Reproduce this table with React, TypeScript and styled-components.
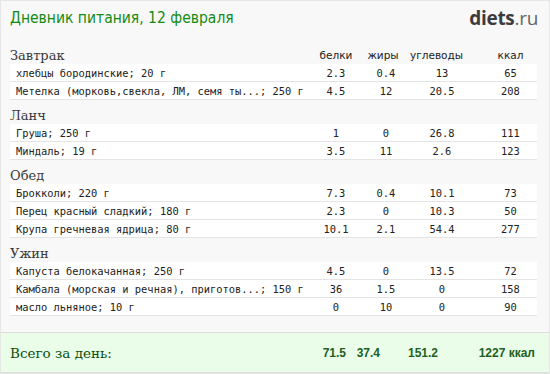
import React from "react";
import styled, { createGlobalStyle } from "styled-components";

const Global = createGlobalStyle`
  html, body { margin: 0; padding: 0; background: #ffffff; }
  * { box-sizing: border-box; }
`;

const COLS = "1fr 52px 48px 64px 63px";

const Page = styled.div`
  width: 550px;
  height: 374px;
  border: 1px solid #e6e6e6;
  background: #f8f8f8;
  display: flex;
  flex-direction: column;
  overflow: hidden;
`;

const Header = styled.header`
  height: 39px;
  display: flex;
  justify-content: space-between;
  align-items: flex-start;
  padding: 7px 11px 0 9px;
`;

const Title = styled.h1`
  margin: 0;
  font-family: "DejaVu Sans Condensed", "DejaVu Sans", sans-serif;
  font-stretch: condensed;
  font-weight: normal;
  font-size: 15.5px;
  line-height: 20px;
  color: #138a13;
`;

const Logo = styled.div`
  font-family: "Open Sans", "Liberation Sans", sans-serif;
  font-size: 19px;
  line-height: 20px;
  letter-spacing: -0.3px;
  color: #666;
`;

const LogoStrong = styled.span`
  font-weight: 700;
  color: #3c3c3c;
`;

const Content = styled.main`
  padding: 0 12px 0 9px;
  flex: 1;
`;

const SectionHead = styled.div`
  display: grid;
  grid-template-columns: ${COLS};
  height: 24px;
  align-items: end;
`;

const SectionTitle = styled.h2`
  margin: 0;
  font-family: "DejaVu Serif", "Liberation Serif", serif;
  font-weight: normal;
  font-size: 13px;
  line-height: 17px;
  color: #3a3a3a;
`;

const HeadCell = styled.div<{ $nudge?: number; $last?: boolean }>`
  text-align: center;
  font-family: "DejaVu Sans", sans-serif;
  font-size: 10.5px;
  line-height: 14px;
  margin-bottom: 2px;
  color: #222;
  padding-right: ${(p) => p.$nudge ?? 0}px;
  padding-left: ${(p) => (p.$last ? 10 : 0)}px;
`;

const Row = styled.div`
  display: grid;
  grid-template-columns: ${COLS};
  height: 18px;
  background: #ffffff;
  border-bottom: 1px solid #e4e4e4;
  align-items: center;
  font-family: "DejaVu Sans Mono", "Liberation Mono", monospace;
  font-size: 10.4px;
  color: #222;
`;

const NameCell = styled.div`
  padding-left: 6px;
  white-space: nowrap;
`;

const NumCell = styled.div`
  text-align: center;
  &:last-child { padding-left: 10px; }
`;

const Totals = styled.footer`
  height: 41px;
  border-top: 1px solid #dcdcdc;
  border-bottom: 1px solid #dcdcdc;
  background: #e9fde9;
  display: grid;
  grid-template-columns: 1fr 50px 34px 58px 97px;
  align-items: center;
  padding: 0 14px 0 9px;
`;

const TotalLabel = styled.div`
  font-family: "DejaVu Serif", "Liberation Serif", serif;
  font-size: 13.5px;
  color: #0c4f0c;
`;

const TotalNum = styled.div`
  text-align: right;
  font-family: "Liberation Sans", Arial, sans-serif;
  font-weight: bold;
  font-size: 12px;
  color: #1f5f1f;
`;

type Item = [string, string, string, string, string];
type Section = { title: string; items: Item[] };

const sections: Section[] = [
  {
    title: "Завтрак",
    items: [
      ["хлебцы бородинские; 20 г", "2.3", "0.4", "13", "65"],
      ["Метелка (морковь,свекла, ЛМ, семя ты...; 250 г", "4.5", "12", "20.5", "208"],
    ],
  },
  {
    title: "Ланч",
    items: [
      ["Груша; 250 г", "1", "0", "26.8", "111"],
      ["Миндаль; 19 г", "3.5", "11", "2.6", "123"],
    ],
  },
  {
    title: "Обед",
    items: [
      ["Брокколи; 220 г", "7.3", "0.4", "10.1", "73"],
      ["Перец красный сладкий; 180 г", "2.3", "0", "10.3", "50"],
      ["Крупа гречневая ядрица; 80 г", "10.1", "2.1", "54.4", "277"],
    ],
  },
  {
    title: "Ужин",
    items: [
      ["Капуста белокачанная; 250 г", "4.5", "0", "13.5", "72"],
      ["Камбала (морская и речная), приготов...; 150 г", "36", "1.5", "0", "158"],
      ["масло льняное; 10 г", "0", "10", "0", "90"],
    ],
  },
];

export default function App() {
  return (
    <>
      <Global />
      <Page>
        <Header>
          <Title>Дневник питания, 12 февраля</Title>
          <Logo>
            <LogoStrong>diets</LogoStrong>.ru
          </Logo>
        </Header>
        <Content>
          {sections.map((s, si) => (
            <section key={s.title}>
              <SectionHead>
                <SectionTitle>{s.title}</SectionTitle>
                {si === 0 && (
                  <>
                    <HeadCell>белки</HeadCell>
                    <HeadCell $nudge={6}>жиры</HeadCell>
                    <HeadCell $nudge={18}>углеводы</HeadCell>
                    <HeadCell $last>ккал</HeadCell>
                  </>
                )}
              </SectionHead>
              {s.items.map((it) => (
                <Row key={it[0]}>
                  <NameCell>{it[0]}</NameCell>
                  <NumCell>{it[1]}</NumCell>
                  <NumCell>{it[2]}</NumCell>
                  <NumCell>{it[3]}</NumCell>
                  <NumCell>{it[4]}</NumCell>
                </Row>
              ))}
            </section>
          ))}
        </Content>
        <Totals>
          <TotalLabel>Всего за день:</TotalLabel>
          <TotalNum>71.5</TotalNum>
          <TotalNum>37.4</TotalNum>
          <TotalNum>151.2</TotalNum>
          <TotalNum>1227 ккал</TotalNum>
        </Totals>
      </Page>
    </>
  );
}
